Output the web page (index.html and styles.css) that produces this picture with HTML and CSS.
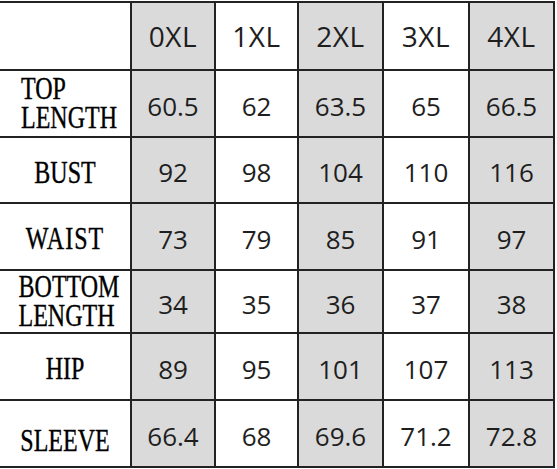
FILE: index.html
```html
<!DOCTYPE html>
<html>
<head>
<meta charset="utf-8">
<link rel="stylesheet" href="styles.css">
</head>
<body>
<div class="chart">
  <div class="cell label"></div>
  <div class="cell head gray">0XL</div>
  <div class="cell head">1XL</div>
  <div class="cell head gray">2XL</div>
  <div class="cell head">3XL</div>
  <div class="cell head gray">4XL</div>

  <div class="cell label"><div class="stack"><span class="lbl">TOP</span><span class="lbl">LENGTH</span></div></div>
  <div class="cell num gray">60.5</div>
  <div class="cell num">62</div>
  <div class="cell num gray">63.5</div>
  <div class="cell num">65</div>
  <div class="cell num gray">66.5</div>

  <div class="cell label"><span class="lbl one">BUST</span></div>
  <div class="cell num gray">92</div>
  <div class="cell num">98</div>
  <div class="cell num gray">104</div>
  <div class="cell num">110</div>
  <div class="cell num gray">116</div>

  <div class="cell label"><span class="lbl one wide">WAIST</span></div>
  <div class="cell num gray">73</div>
  <div class="cell num">79</div>
  <div class="cell num gray">85</div>
  <div class="cell num">91</div>
  <div class="cell num gray">97</div>

  <div class="cell label"><div class="stack"><span class="lbl">BOTTOM</span><span class="lbl">LENGTH</span></div></div>
  <div class="cell num gray">34</div>
  <div class="cell num">35</div>
  <div class="cell num gray">36</div>
  <div class="cell num">37</div>
  <div class="cell num gray">38</div>

  <div class="cell label"><span class="lbl one">HIP</span></div>
  <div class="cell num gray">89</div>
  <div class="cell num">95</div>
  <div class="cell num gray">101</div>
  <div class="cell num">107</div>
  <div class="cell num gray">113</div>

  <div class="cell label"><span class="lbl one low">SLEEVE</span></div>
  <div class="cell num gray">66.4</div>
  <div class="cell num">68</div>
  <div class="cell num gray">69.6</div>
  <div class="cell num">71.2</div>
  <div class="cell num gray">72.8</div>
</div>
</body>
</html>
```

FILE: styles.css
```css
html, body {
  margin: 0;
  padding: 0;
  background: #ffffff;
}

.chart {
  display: grid;
  grid-template-columns: 130px 82px 81px 83px 84px 83px;
  grid-template-rows: 66px 65px 64px 65px 61px 65px 65px;
  gap: 2px;
  width: 555px;
  box-sizing: border-box;
  margin-top: 1px;
  padding: 2px 2px 2px 0;
  background: #222222;
}

.cell {
  background: #ffffff;
  display: flex;
  align-items: center;
  justify-content: center;
  color: #1e1e1e;
  font-family: "Open Sans", "Noto Sans", sans-serif;
}

.gray {
  background: #dadada;
}

.head {
  font-size: 28px;
  letter-spacing: 0.5px;
}

.num {
  font-size: 26px;
  padding-top: 4px;
}

.label {
  color: #000000;
  font-family: "Liberation Serif", "Times New Roman", serif;
}

.stack {
  display: flex;
  flex-direction: column;
  align-items: flex-start;
  gap: 7px;
  padding-left: 8px;
}

.lbl {
  display: block;
  font-size: 24px;
  line-height: 22px;
  transform: scaleY(1.3);
  -webkit-text-stroke: 0.3px #000000;
}

.lbl.one {
  padding-top: 3px;
}

.lbl.wide {
  letter-spacing: 1px;
}

.lbl.low {
  padding-top: 10px;
}
```
